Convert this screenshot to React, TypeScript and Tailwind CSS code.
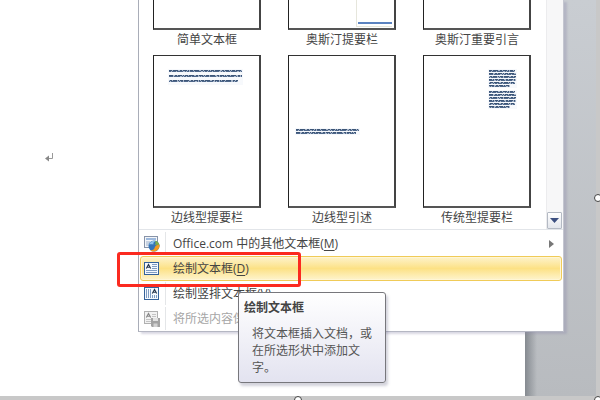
import React from 'react'
import clsx from 'clsx'

function DownloadOfficeIcon() {
  return (
    <svg width="16" height="16" viewBox="0 0 16 16">
      <rect x="0.5" y="0.5" width="13" height="11" fill="#f3f5f8" stroke="#8793a8" />
      <rect x="2" y="2" width="10" height="2" fill="#9db9dd" />
      <rect x="2" y="5" width="4" height="5" fill="#c8d3e2" />
      <circle cx="10" cy="10" r="5.5" fill="#3473b8" />
      <path d="M5 8.500C6 5 10 4 12 5c-2 .4-3 2-2.600 3.500C8 8 6.500 8 5 8.500z" fill="#8fc3ea" />
      <path d="M11 4.700c3 .5 4.800 3 4.500 5.800-1.500-1.800-3.500-2.200-5-1 1.200-1.500 1.300-3.200.5-4.800z" fill="#7fae49" />
      <path d="M15.500 9c.3 4-2.800 6.500-6 6.500-1.500 0-2.500-.5-3.300-1.300 2.800.2 4.300-1 4.600-3 1.200-1.900 3.200-2.700 4.700-2.200z" fill="#f39a1f" />
    </svg>
  )
}

function TextBoxIcon() {
  return (
    <svg width="15" height="13" viewBox="0 0 15 13">
      <rect x="0.5" y="0.5" width="14" height="12" fill="#f4f8fd" stroke="#34619a" />
      <path d="M2.300 6.500 4.500 2.500l2.200 4M3.200 5.300h2.600" fill="none" stroke="#26364d" strokeWidth="1.100" />
      <path d="M8 2.500h5M8 4.500h5M8 6.500h5M2 8.500h11M2 10.500h11" stroke="#7f9cc2" />
    </svg>
  )
}

function VerticalTextBoxIcon() {
  return (
    <svg width="15" height="13" viewBox="0 0 15 13">
      <rect x="0.5" y="0.5" width="14" height="12" fill="#f4f8fd" stroke="#34619a" />
      <path d="M8.300 6.500 10.500 2.500l2.200 4M9.200 5.300h2.600" fill="none" stroke="#26364d" strokeWidth="1.100" />
      <path d="M2.500 2v9M4.500 2v9M6.500 2v9M8.500 8v3M10.500 8v3M12.500 8v3" stroke="#7f9cc2" />
    </svg>
  )
}

function SaveSelectionIcon() {
  return (
    <svg width="16" height="16" viewBox="0 0 16 16">
      <rect x="0.5" y="0.5" width="13" height="12" fill="#f2f2f2" stroke="#b0b0b0" />
      <path d="M2.300 6.500 4.500 2.500l2.200 4M3.200 5.300h2.600" fill="none" stroke="#888" strokeWidth="1.100" />
      <path d="M8 3.500h4M8 5.500h4M2 8.500h6M2 10.500h5" stroke="#c4c4c4" />
      <path d="M7 7h9v9H8l-1-1z" fill="#a3a3a3" />
      <path d="M9 7h5v3H9z" fill="#e2e2e2" />
      <path d="M9.500 12.500h4V16h-4z" fill="#d2d2d2" />
    </svg>
  )
}

// rows of greeked text: each entry is the width of one line
function Greeked({ lines, step }: { lines: number[]; step: number }) {
  return (
    <svg
      width={Math.max(...lines) + 2}
      height={lines.length * step + 1}
      className="block bg-[#f7f9fc]">
      {lines.map((width, index) => (
        <g key={index} transform={`translate(1 ${index * step + 1})`} fill="none">
          <path d={`M0 1h${width}`} stroke="#a9b7cb" strokeWidth="2" />
          <path
            d={`M0 .5h${width}`}
            stroke="#3d5678"
            strokeDasharray="3 1 5 2 2 1 4 1 1 1"
            strokeDashoffset={index * 5}
          />
          <path
            d={`M0 1.500h${width}`}
            stroke="#4f688b"
            strokeDasharray="2 1 4 1 6 2 1 1"
            strokeDashoffset={index * 3}
          />
        </g>
      ))}
    </svg>
  )
}

const TOP_ROW = [
  { label: '简单文本框', preview: null },
  {
    label: '奥斯汀提要栏',
    preview: (
      <div className="ml-auto mr-[2px] h-[27px] w-9 border-b border-l border-[#e6e6dc] pt-[22px]">
        <div className="ml-px h-[2px] bg-[#5b83c0]" />
      </div>
    ),
  },
  { label: '奥斯汀重要引言', preview: null },
]

const BOTTOM_ROW = [
  {
    label: '边线型提要栏',
    preview: (
      <div className="ml-[14px] mt-[13px]">
        <Greeked lines={[73, 73, 69]} step={5} />
      </div>
    ),
  },
  {
    label: '边线型引述',
    preview: (
      <div className="ml-[6px] mt-[72px]">
        <Greeked lines={[63, 60]} step={3} />
      </div>
    ),
  },
  {
    label: '传统型提要栏',
    preview: (
      <div className="ml-16 mt-[13px] flex flex-col gap-[2px]">
        <Greeked lines={[26, 27, 27, 27, 26, 21]} step={3} />
        <Greeked lines={[26, 27, 27, 27, 26, 21]} step={3} />
      </div>
    ),
  },
]

type CommandProps = {
  icon: React.ReactNode
  text: string
  hotkey: string
  submenu?: boolean
  active?: boolean
  disabled?: boolean
}

const COMMANDS: CommandProps[] = [
  { icon: <DownloadOfficeIcon />, text: 'Office.com 中的其他文本框', hotkey: 'M', submenu: true },
  { icon: <TextBoxIcon />, text: '绘制文本框', hotkey: 'D', active: true },
  { icon: <VerticalTextBoxIcon />, text: '绘制竖排文本框', hotkey: 'V' },
  { icon: <SaveSelectionIcon />, text: '将所选内容保存到文本框库', hotkey: 'S', disabled: true },
]

function GalleryItem({
  label,
  preview,
  cut,
}: {
  label: string
  preview: React.ReactNode
  cut?: boolean
}) {
  return (
    <button type="button" className="flex w-[108px] flex-col items-stretch">
      <span
        className={clsx(
          'block border-b-2 border-l border-r-2 border-b-[#555] border-l-[#222] border-r-[#444] border-t-[#333]',
          cut ? 'h-[30px]' : 'h-[153px] border-t',
        )}>
        {preview}
      </span>
      <span className="h-5 text-center leading-5">{label}</span>
    </button>
  )
}

function Gallery() {
  return (
    <div className="flex border-b border-[#e2e5e9]">
      <div className="flex flex-1 flex-col pl-[14px]">
        <div className="flex gap-[27px]">
          {TOP_ROW.map((item) => (
            <GalleryItem key={item.label} {...item} cut />
          ))}
        </div>
        <div className="flex gap-[27px] pb-px pt-[5px]">
          {BOTTOM_ROW.map((item) => (
            <GalleryItem key={item.label} {...item} />
          ))}
        </div>
      </div>
      <div className="flex w-[17px] flex-col justify-end border-l border-[#ececee] bg-[#f7f7f8]">
        <button
          type="button"
          aria-label="向下滚动"
          className="flex h-[17px] w-[15px] items-center justify-center rounded-[1px] border border-[#b4bac4] bg-linear-to-b from-white to-[#e3e6ec]">
          <svg width="9" height="5" viewBox="0 0 9 5">
            <path d="M0 0h9L4.500 5z" fill="#3c4f80" />
          </svg>
        </button>
      </div>
    </div>
  )
}

function Command({ icon, text, hotkey, submenu, active, disabled }: CommandProps) {
  return (
    <button
      type="button"
      role="menuitem"
      disabled={disabled}
      className={clsx(
        'flex h-[25px] w-full items-center whitespace-nowrap rounded-[3px] border text-left',
        active
          ? 'border-[#f0cb58] bg-linear-to-b from-[#fdf3cb] via-[#fce184] to-[#fef4cd] shadow-[inset_0_0_0_1px_#fff6d4]'
          : 'border-transparent',
        disabled && 'text-[#a6a6a6]',
      )}>
      <span className="flex w-6 justify-start pl-[3px]">{icon}</span>
      <span
        className={clsx(
          'flex-1 self-stretch border-l pl-[7px] leading-6',
          active ? 'border-transparent' : 'border-[#e4e6e8]',
        )}>
        {text}(<u className="underline-offset-2">{hotkey}</u>)
      </span>
      {submenu && (
        <svg width="5" height="8" viewBox="0 0 5 8" className="mr-[7px]">
          <path d="M0 0v8l5-4z" fill="#777" />
        </svg>
      )}
    </button>
  )
}

function Handle({ className }: { className: string }) {
  return (
    <span
      className={clsx('absolute size-2 rounded-full border border-[#444] bg-white', className)}
    />
  )
}

export default function App() {
  return (
    <div className="relative h-screen overflow-hidden bg-[#c8c8c8] pb-1 pr-1 font-['Open_Sans','Noto_Sans_CJK_SC',sans-serif] text-xs text-[#444]">
      <div className="flex h-full">
        <main className="flex-1 bg-white pl-[45px] pt-[152px]">
          <svg width="9" height="10" viewBox="0 0 9 10">
            <path d="M7.500 1v5.500H2" fill="none" stroke="#999" />
            <path d="M0 6.500 4 3.500v6z" fill="#888" />
          </svg>
        </main>
        <div className="w-[71px] bg-linear-to-b from-[#c9cdd2] to-[#b8bbbf]">
          <div className="h-full w-3 bg-linear-to-r from-[#858a90] to-transparent" />
        </div>
      </div>

      <div
        role="menu"
        className="absolute left-[138px] top-0 w-[426px] border-x border-b border-b-[#b5b7c3] border-l-[#a9adb8] border-r-[#c4c6d0] bg-white shadow-[3px_2px_2px_#8c8aaa55]">
        <Gallery />
        <div className="px-px pt-px">
          {COMMANDS.map((command) => (
            <Command key={command.hotkey} {...command} />
          ))}
        </div>
      </div>

      <div
        role="tooltip"
        className="absolute left-[238px] top-[292px] w-[148px] rounded-[3px] border border-[#77777c] bg-linear-to-b from-white to-[#e3e3f0] px-[5px] pb-[6px] pt-[6px] shadow-[2px_3px_3px_#55557744]">
        <h2 className="font-bold leading-[18px]">绘制文本框</h2>
        <p className="pl-2 pt-2 leading-[17px] text-[#555]">将文本框插入文档，或在所选形状中添加文字。</p>
      </div>

      <div className="pointer-events-none absolute left-[117px] top-[252px] h-[35px] w-[184px] rounded-[3px] border-3 border-[#fb2a20]" />

      <Handle className="-right-[2px] top-[194px]" />
      <Handle className="-bottom-1 left-1/2 -ml-[6px]" />
      <Handle className="-bottom-1 -right-[2px]" />
    </div>
  )
}
